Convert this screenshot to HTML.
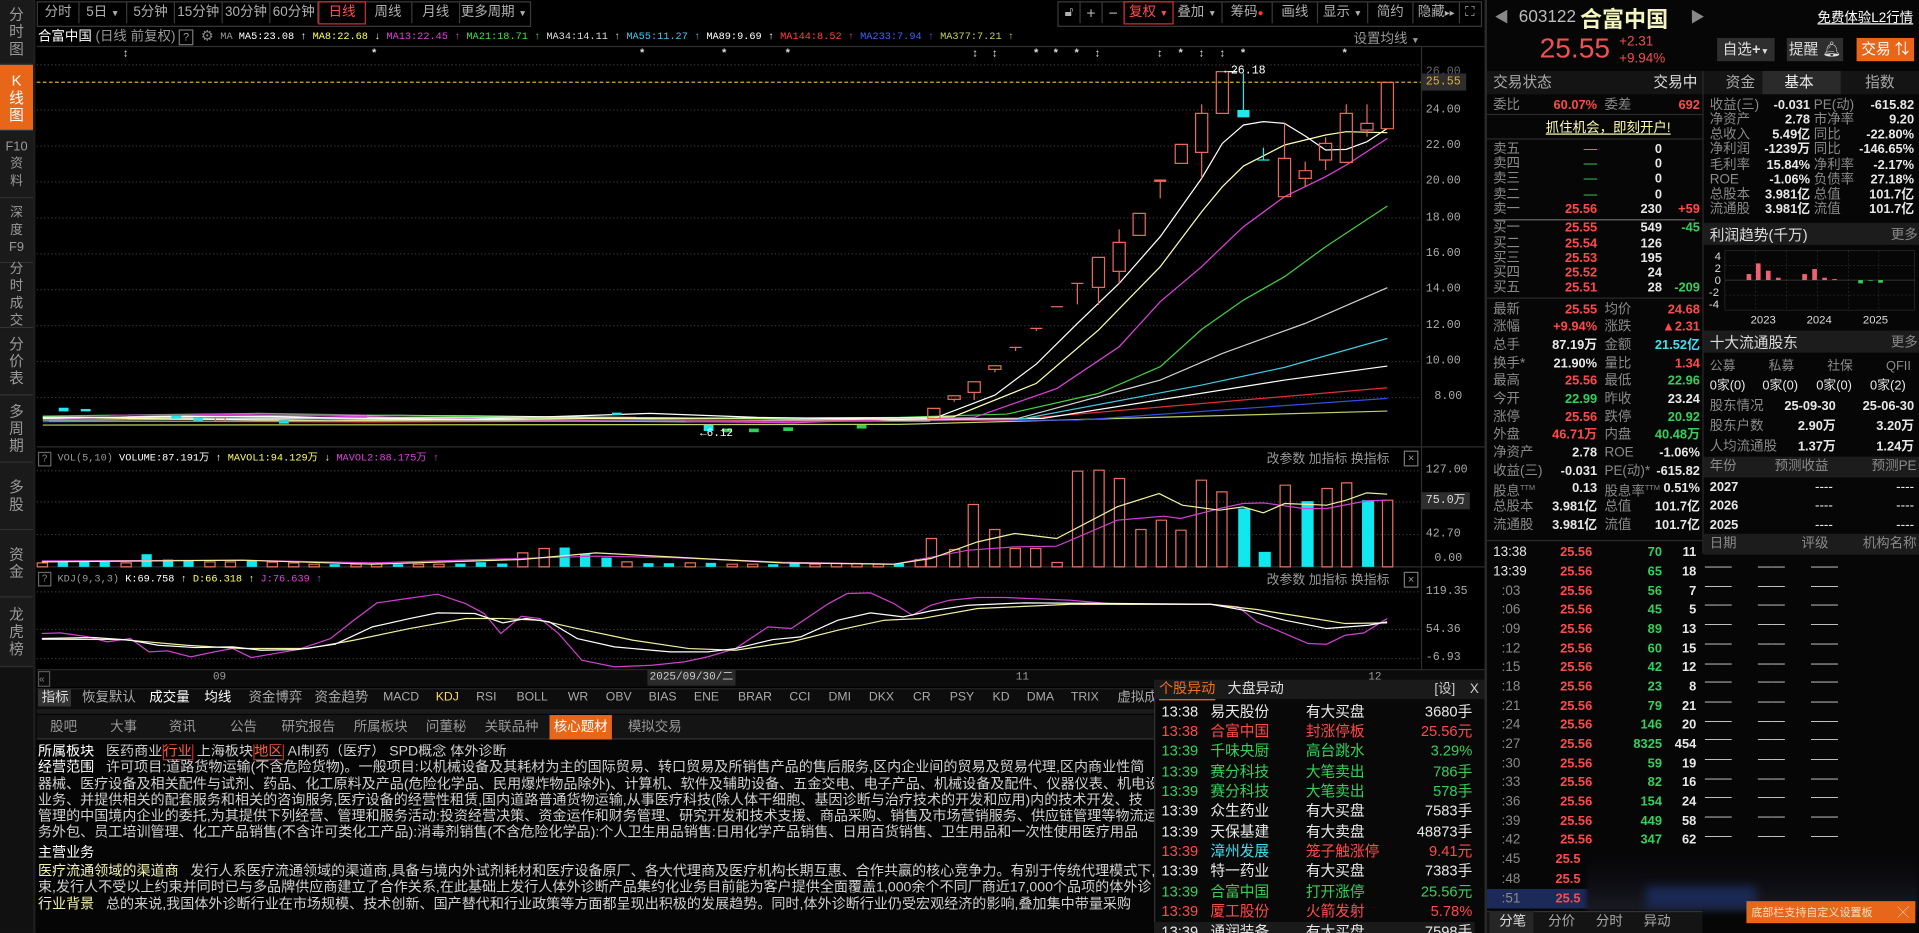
<!DOCTYPE html>
<html><head><meta charset="utf-8">
<style>
html,body{margin:0;padding:0;background:#000;overflow:hidden;width:1919px;height:933px}
#w{position:absolute;left:0;top:0;width:1568px;height:762px;transform:scale(1.22385,1.2244);transform-origin:0 0;background:#050505;font-family:"Liberation Sans","Noto Sans CJK SC",sans-serif;color:#c8c8c8;overflow:hidden}
.a{position:absolute;white-space:nowrap}
.sb{position:absolute;left:0;width:27px;background:#1a1a1a;border-bottom:1px solid #333;color:#9a9a9a;font-size:12px;line-height:14px;text-align:center;display:flex;flex-direction:column;justify-content:center}
.tb{position:absolute;top:2px;height:17px;line-height:17px;font-size:11px;color:#b0b0b0;border-right:1px solid #3a3a3a;text-align:center}
.mono{font-family:"Liberation Mono","Noto Sans CJK SC",monospace}
#R{position:absolute;left:1213px;top:0;width:355px;height:762px;background:#060606;border-left:2px solid #2a2a2a}
.row{position:absolute;left:0;right:0;height:14px;line-height:14px;font-size:11px}
.row span{position:absolute;white-space:nowrap}
.n{font-weight:bold;font-size:10.5px}
.g{color:#8a8a8a}.w{color:#e8e8e8}.r{color:#ff4a4a}.gr{color:#35d05a}.c{color:#40e0f0}.y{color:#e8e070}
.L0{left:5px}.R1{right:265px}.L2{left:96px}.R2{right:181px}.Rv{right:212px}.L3{left:182px}.R3{right:91px}.L4{left:267px}.R4{right:6px}
.hb{position:absolute;background:#1c1c1c}
.ytx{font-size:11.5px;line-height:13.3px;color:#d0d0d0}
.ab{position:absolute;left:0;width:262px;height:16px;font-size:12px;line-height:16px;white-space:nowrap}
</style></head><body><div id="w">

<svg class="a" style="left:0;top:0" width="1213" height="562" viewBox="0 0 1213 562">
<rect width="1213" height="562" fill="#000"/>
<g stroke="#3a3a3a" stroke-dasharray="1 2" stroke-width="1">
<line x1="30" x2="1161" y1="89.9" y2="89.9"/><line x1="30" x2="1161" y1="119.3" y2="119.3"/><line x1="30" x2="1161" y1="148.6" y2="148.6"/><line x1="30" x2="1161" y1="178" y2="178"/><line x1="30" x2="1161" y1="207.3" y2="207.3"/><line x1="30" x2="1161" y1="236.6" y2="236.6"/><line x1="30" x2="1161" y1="266" y2="266"/><line x1="30" x2="1161" y1="295.3" y2="295.3"/><line x1="30" x2="1161" y1="324.7" y2="324.7"/><line x1="30" x2="1161" y1="53" y2="53"/>
<line x1="30" x2="1161" y1="384.5" y2="384.5"/><line x1="30" x2="1161" y1="409.9" y2="409.9"/><line x1="30" x2="1161" y1="436.6" y2="436.6"/>
<line x1="30" x2="1161" y1="483.4" y2="483.4"/><line x1="30" x2="1161" y1="514" y2="514"/><line x1="30" x2="1161" y1="537.9" y2="537.9"/>
</g>
<line x1="30" x2="1161" y1="67.2" y2="67.2" stroke="#d8a840" stroke-dasharray="3 2"/>
<g stroke="#2e2e2e"><line x1="30" x2="1213" y1="38" y2="38"/><line x1="30" x2="1213" y1="365" y2="365"/><line x1="30" x2="1213" y1="463" y2="463"/><line x1="30" x2="1213" y1="547" y2="547"/><line x1="1161.5" x2="1161.5" y1="38" y2="547"/></g>

<g transform="translate(735.3,49) scale(0.2918,0.2723)" fill="none" stroke-width="1">
<polyline vector-effect="non-scaling-stroke" stroke="#c0d060" points="-2400,1095 0,1093 1365,1053"/>
<polyline vector-effect="non-scaling-stroke" stroke="#3050e0" points="-2400,1085 -1200,1080 0,1082 500,1080 1365,1015"/>
<polyline vector-effect="non-scaling-stroke" stroke="#e03030" points="-2400,1082 -1500,1086 0,1080 300,1080 1365,983"/>
<polyline vector-effect="non-scaling-stroke" stroke="#ffffff" points="-2400,1072 -1400,1066 0,1080 400,1075 1077,960 1365,918"/>
<polyline vector-effect="non-scaling-stroke" stroke="#40c8e0" points="-2400,1080 -900,1072 0,1078 350,1075 845,975 1077,922 1365,835"/>
<polyline vector-effect="non-scaling-stroke" stroke="#d0d0d0" points="-2400,1070 -600,1085 0,1076 330,1075 729,960 903,880 1135,790 1365,683"/>
<polyline vector-effect="non-scaling-stroke" stroke="#40d040" points="-2400,1068 -1800,1060 -700,1078 0,1072 300,1062 556,1000 729,920 845,808 962,720 1077,650 1192,560 1365,438"/>
<polyline vector-effect="non-scaling-stroke" stroke="#e040e0" points="-2400,1078 -1900,1062 -1000,1080 -300,1088 0,1077 208,1072 440,985 614,860 729,725 845,620 903,560 962,500 1077,410 1192,350 1250,315 1365,235"/>
<polyline vector-effect="non-scaling-stroke" stroke="#ffffb0" points="-2400,1072 -1600,1082 -800,1075 0,1073 150,1070 382,970 556,810 729,620 845,455 903,380 962,318 1077,255 1192,225 1250,215 1365,218"/>
<polyline vector-effect="non-scaling-stroke" stroke="#ffffff" points="-2400,1075 -2000,1068 -1200,1078 -700,1060 -400,1072 0,1078 95,1075 266,1005 382,912 497,790 614,670 729,530 845,355 903,250 962,195 1018,185 1077,190 1135,228 1192,270 1250,268 1308,245 1365,205"/>
<g stroke="#e8685a">
<rect vector-effect="non-scaling-stroke" x="78" y="1045" width="34" height="30"/>
<rect vector-effect="non-scaling-stroke" x="135" y="1007" width="34" height="11"/><line vector-effect="non-scaling-stroke" x1="152" x2="152" y1="1018" y2="1025"/>
<rect vector-effect="non-scaling-stroke" x="191" y="965" width="34" height="32"/><line vector-effect="non-scaling-stroke" x1="208" x2="208" y1="997" y2="1020"/>
<rect vector-effect="non-scaling-stroke" x="249" y="917" width="34" height="11"/><line vector-effect="non-scaling-stroke" x1="266" x2="266" y1="928" y2="937"/>
<line vector-effect="non-scaling-stroke" x1="307" x2="341" y1="862" y2="862"/><line vector-effect="non-scaling-stroke" x1="324" x2="324" y1="862" y2="873"/>
<line vector-effect="non-scaling-stroke" x1="365" x2="399" y1="805" y2="805"/><line vector-effect="non-scaling-stroke" x1="382" x2="382" y1="805" y2="813"/>
<line vector-effect="non-scaling-stroke" x1="423" x2="457" y1="740" y2="740"/>
<line vector-effect="non-scaling-stroke" x1="480" x2="514" y1="670" y2="670"/><line vector-effect="non-scaling-stroke" x1="497" x2="497" y1="670" y2="733"/>
<rect vector-effect="non-scaling-stroke" x="539" y="592" width="34" height="90"/><line vector-effect="non-scaling-stroke" x1="556" x2="556" y1="682" y2="735"/>
<rect vector-effect="non-scaling-stroke" x="597" y="547" width="34" height="87"/><line vector-effect="non-scaling-stroke" x1="614" x2="614" y1="508" y2="547"/><line vector-effect="non-scaling-stroke" x1="614" x2="614" y1="634" y2="670"/>
<rect vector-effect="non-scaling-stroke" x="653" y="460" width="34" height="66"/>
<line vector-effect="non-scaling-stroke" x1="712" x2="746" y1="362" y2="362" stroke-width="2"/><line vector-effect="non-scaling-stroke" x1="729" x2="729" y1="362" y2="415"/>
<rect vector-effect="non-scaling-stroke" x="771" y="253" width="34" height="57"/>
<rect vector-effect="non-scaling-stroke" x="828" y="160" width="34" height="117"/><line vector-effect="non-scaling-stroke" x1="845" x2="845" y1="133" y2="160"/><line vector-effect="non-scaling-stroke" x1="845" x2="845" y1="277" y2="355"/>
<rect vector-effect="non-scaling-stroke" x="886" y="35" width="34" height="125"/>
<rect vector-effect="non-scaling-stroke" x="1060" y="295" width="34" height="115"/><line vector-effect="non-scaling-stroke" x1="1077" x2="1077" y1="190" y2="295"/>
<rect vector-effect="non-scaling-stroke" x="1118" y="332" width="34" height="23"/><line vector-effect="non-scaling-stroke" x1="1135" x2="1135" y1="305" y2="332"/><line vector-effect="non-scaling-stroke" x1="1135" x2="1135" y1="355" y2="380"/>
<rect vector-effect="non-scaling-stroke" x="1175" y="250" width="34" height="50"/><line vector-effect="non-scaling-stroke" x1="1192" x2="1192" y1="232" y2="250"/><line vector-effect="non-scaling-stroke" x1="1192" x2="1192" y1="300" y2="330"/>
<rect vector-effect="non-scaling-stroke" x="1233" y="160" width="34" height="147"/><line vector-effect="non-scaling-stroke" x1="1250" x2="1250" y1="133" y2="160"/>
<rect vector-effect="non-scaling-stroke" x="1291" y="190" width="34" height="20"/><line vector-effect="non-scaling-stroke" x1="1308" x2="1308" y1="133" y2="190"/><line vector-effect="non-scaling-stroke" x1="1308" x2="1308" y1="210" y2="230"/>
<rect vector-effect="non-scaling-stroke" x="1348" y="67" width="34" height="139"/>
</g>
<rect x="945" y="150" width="34" height="22" fill="#20e8f0"/><line vector-effect="non-scaling-stroke" x1="962" x2="962" y1="40" y2="150" stroke="#20e8f0"/>
<line vector-effect="non-scaling-stroke" x1="1001" x2="1035" y1="300" y2="300" stroke="#20e8f0"/><line vector-effect="non-scaling-stroke" x1="1018" x2="1018" y1="263" y2="300" stroke="#20e8f0"/>
<line vector-effect="non-scaling-stroke" x1="920" x2="945" y1="35" y2="35" stroke="#fff"/>
</g>
<g stroke-width="1">
<rect x="48" y="333" width="8" height="3" fill="#20e8f0"/><rect x="66" y="334" width="8" height="2" fill="#20e8f0"/><rect x="140" y="339" width="8" height="3" fill="#20e8f0"/><rect x="158" y="341" width="8" height="3" fill="#20e8f0"/><rect x="176" y="341" width="8" height="3" fill="none" stroke="#e8685a"/><rect x="228" y="343" width="8" height="3" fill="#20e8f0"/><rect x="500" y="337" width="8" height="2" fill="#20e8f0"/><rect x="575" y="347" width="8" height="5" fill="#20e8f0"/><rect x="590" y="350" width="8" height="3" fill="#30d050"/><rect x="612" y="350" width="8" height="3" fill="#30d050"/><rect x="640" y="349" width="8" height="3" fill="#30d050"/><rect x="700" y="347" width="8" height="3" fill="#30d050"/>
<line x1="40" x2="760" y1="344" y2="344" stroke="#a8a060"/>
<line x1="90" x2="300" y1="339" y2="339" stroke="#c040c0"/><line x1="300" x2="520" y1="341" y2="341" stroke="#e0e080"/><line x1="560" x2="720" y1="344" y2="344" stroke="#e04080"/>
</g>
<text x="572" y="356" fill="#fff" font-size="9" font-family="Liberation Mono">←6.12</text>
<text x="1000" y="60" fill="#fff" font-size="9.5" font-family="Liberation Mono">←26.18</text>

<g transform="translate(0,359.5) scale(0.7607,0.2723)">
<g fill="none" stroke="#e8705a">
<rect vector-effect="non-scaling-stroke" x="40" y="368" width="11" height="12"/><rect vector-effect="non-scaling-stroke" x="130" y="368" width="11" height="12"/><rect vector-effect="non-scaling-stroke" x="220" y="365" width="11" height="15"/><rect vector-effect="non-scaling-stroke" x="242" y="365" width="11" height="15"/><rect vector-effect="non-scaling-stroke" x="287" y="366" width="11" height="14"/><rect vector-effect="non-scaling-stroke" x="310" y="368" width="11" height="12"/><rect vector-effect="non-scaling-stroke" x="332" y="372" width="11" height="8"/><rect vector-effect="non-scaling-stroke" x="377" y="372" width="11" height="8"/><rect vector-effect="non-scaling-stroke" x="399" y="370" width="11" height="10"/><rect vector-effect="non-scaling-stroke" x="444" y="372" width="11" height="8"/><rect vector-effect="non-scaling-stroke" x="466" y="372" width="11" height="8"/><rect vector-effect="non-scaling-stroke" x="556" y="338" width="11" height="42"/><rect vector-effect="non-scaling-stroke" x="579" y="325" width="11" height="55"/><rect vector-effect="non-scaling-stroke" x="668" y="365" width="11" height="15"/><rect vector-effect="non-scaling-stroke" x="736" y="368" width="11" height="12"/><rect vector-effect="non-scaling-stroke" x="781" y="372" width="11" height="8"/><rect vector-effect="non-scaling-stroke" x="803" y="372" width="11" height="8"/><rect vector-effect="non-scaling-stroke" x="870" y="372" width="11" height="8"/><rect vector-effect="non-scaling-stroke" x="893" y="369" width="11" height="11"/><rect vector-effect="non-scaling-stroke" x="915" y="370" width="11" height="10"/><rect vector-effect="non-scaling-stroke" x="938" y="372" width="11" height="8"/><rect vector-effect="non-scaling-stroke" x="983" y="358" width="11" height="22"/>
<rect vector-effect="non-scaling-stroke" x="995" y="295" width="11" height="85"/><rect vector-effect="non-scaling-stroke" x="1020" y="328" width="11" height="52"/><rect vector-effect="non-scaling-stroke" x="1040" y="193" width="11" height="187"/><rect vector-effect="non-scaling-stroke" x="1063" y="268" width="11" height="112"/><rect vector-effect="non-scaling-stroke" x="1085" y="325" width="11" height="55"/><rect vector-effect="non-scaling-stroke" x="1107" y="325" width="11" height="55"/><rect vector-effect="non-scaling-stroke" x="1130" y="367" width="11" height="13"/><rect vector-effect="non-scaling-stroke" x="1152" y="93" width="11" height="287"/><rect vector-effect="non-scaling-stroke" x="1175" y="90" width="11" height="290"/><rect vector-effect="non-scaling-stroke" x="1197" y="115" width="11" height="265"/><rect vector-effect="non-scaling-stroke" x="1220" y="268" width="11" height="112"/><rect vector-effect="non-scaling-stroke" x="1242" y="240" width="11" height="140"/><rect vector-effect="non-scaling-stroke" x="1263" y="270" width="11" height="110"/><rect vector-effect="non-scaling-stroke" x="1285" y="120" width="11" height="260"/><rect vector-effect="non-scaling-stroke" x="1307" y="155" width="11" height="225"/><rect vector-effect="non-scaling-stroke" x="1375" y="135" width="11" height="245"/><rect vector-effect="non-scaling-stroke" x="1420" y="145" width="11" height="235"/><rect vector-effect="non-scaling-stroke" x="1441" y="128" width="11" height="252"/><rect vector-effect="non-scaling-stroke" x="1485" y="180" width="11" height="200"/>
</g>
<g fill="#10e8f0">
<rect x="62" y="365" width="11" height="15"/><rect x="85" y="365" width="11" height="15"/><rect x="107" y="365" width="11" height="15"/><rect x="152" y="342" width="11" height="38"/><rect x="175" y="358" width="11" height="22"/><rect x="197" y="362" width="11" height="18"/><rect x="265" y="362" width="11" height="18"/><rect x="354" y="372" width="11" height="8"/><rect x="422" y="372" width="11" height="8"/><rect x="489" y="370" width="11" height="10"/><rect x="511" y="366" width="11" height="14"/><rect x="534" y="370" width="11" height="10"/><rect x="601" y="322" width="11" height="58"/><rect x="623" y="340" width="11" height="40"/><rect x="646" y="352" width="11" height="28"/><rect x="691" y="369" width="11" height="11"/><rect x="713" y="369" width="11" height="11"/><rect x="758" y="368" width="11" height="12"/><rect x="825" y="372" width="11" height="8"/><rect x="848" y="370" width="11" height="10"/><rect x="960" y="370" width="11" height="10"/>
<rect x="1330" y="205" width="13" height="175"/><rect x="1352" y="335" width="13" height="45"/><rect x="1398" y="183" width="13" height="197"/><rect x="1463" y="180" width="13" height="200"/>
</g>
<polyline vector-effect="non-scaling-stroke" fill="none" stroke="#d040d0" points="45,362 260,360 400,368 640,348 720,352 840,366 960,372 1040,330 1090,320 1135,318 1200,240 1250,228 1268,235 1310,205 1335,190 1357,188 1400,205 1425,205 1468,182 1490,180"/>
<polyline vector-effect="non-scaling-stroke" fill="none" stroke="#f0f0a0" points="45,365 260,360 400,372 560,358 640,338 720,350 840,368 960,372 1000,355 1050,305 1090,280 1135,295 1200,200 1245,160 1270,195 1310,210 1335,200 1357,218 1380,190 1425,195 1446,180 1468,158 1490,162"/>
<polyline vector-effect="non-scaling-stroke" fill="none" stroke="#d040d0" points="45,580 65,578 95,590 115,605 140,595 160,635 180,632 205,650 230,635 250,625 270,652 295,640 320,628 355,595 380,540 405,488 430,478 470,462 500,490 520,520 538,580 560,528 580,535 600,580 625,660 660,680 700,675 735,665 760,650 790,625 825,560 850,565 890,490 910,460 935,458 960,490 980,525 1000,495 1020,480 1050,472 1080,472 1150,480 1200,492 1300,492 1330,500 1350,545 1380,580 1405,610 1425,612 1445,585 1465,578 1490,535"/>
<polyline vector-effect="non-scaling-stroke" fill="none" stroke="#f0f0a0" points="45,597 130,598 200,615 260,625 330,625 380,600 440,565 500,535 540,535 580,540 620,565 680,600 740,625 790,630 850,605 900,570 950,540 990,535 1050,505 1150,492 1300,492 1350,508 1400,530 1445,550 1490,548"/>
<polyline vector-effect="non-scaling-stroke" fill="none" stroke="#ffffff" points="45,595 100,592 140,600 170,615 210,622 250,620 280,630 320,628 360,612 400,560 440,535 470,518 510,520 540,548 565,535 590,545 620,595 660,620 720,635 760,635 790,625 830,598 860,590 900,540 935,518 970,530 1000,512 1040,495 1100,488 1200,490 1300,492 1340,512 1380,540 1425,565 1470,555 1490,545"/>
</g>
</svg>

<div class="sb" style="top:0;height:52px">分<br>时<br>图</div>
<div class="sb" style="top:53px;height:53px;background:#e8661a;color:#fff">K<br>线<br>图</div>
<div class="sb" style="top:107px;height:54px;font-size:10.5px">F10<br>资<br>料</div>
<div class="sb" style="top:162px;height:52px;font-size:10.5px">深<br>度<br>F9</div>
<div class="sb" style="top:215px;height:52px;font-size:11px">分<br>时<br>成<br>交</div>
<div class="sb" style="top:268px;height:54px">分<br>价<br>表</div>
<div class="sb" style="top:323px;height:54px">多<br>周<br>期</div>
<div class="sb" style="top:378px;height:54px">多<br>股</div>
<div class="sb" style="top:433px;height:54px">资<br>金</div>
<div class="sb" style="top:488px;height:56px">龙<br>虎<br>榜</div>
<div class="a" style="left:0;top:545px;width:27px;height:217px;background:#111"></div>
<div class="a" style="left:27px;top:0;width:2px;height:762px;background:#1e1e1e"></div>

<div class="a" style="left:30px;top:1px;width:402px;height:19px;border:1px solid #3a3a3a"></div>
<div class="tb" style="left:31px;width:33px">分时</div>
<div class="tb" style="left:65px;width:38px">5日 <span style="font-size:7px">▼</span></div>
<div class="tb" style="left:104px;width:38px">5分钟</div>
<div class="tb" style="left:143px;width:38px">15分钟</div>
<div class="tb" style="left:182px;width:38px">30分钟</div>
<div class="tb" style="left:221px;width:38px">60分钟</div>
<div class="tb" style="left:260px;width:37px;color:#ff5050;border:1px solid #d03030;top:1px;height:17px">日线</div>
<div class="tb" style="left:298px;width:38px">周线</div>
<div class="tb" style="left:337px;width:38px">月线</div>
<div class="tb" style="left:376px;width:55px;border:none">更多周期 <span style="font-size:7px">▼</span></div>

<div class="a" style="left:864px;top:1px;width:345px;height:19px;border:1px solid #3a3a3a"></div>
<div class="tb" style="left:865px;width:17px">🔓︎</div>
<div class="tb" style="left:883px;width:17px;font-size:13px">+</div>
<div class="tb" style="left:901px;width:17px;font-size:13px">−</div>
<div class="tb" style="left:918px;width:39px;color:#ff5050;border:1px solid #d03030;top:1px;height:17px">复权 <span style="font-size:7px">▼</span></div>
<div class="tb" style="left:958px;width:40px">叠加 <span style="font-size:7px">▼</span></div>
<div class="tb" style="left:999px;width:40px">筹码<span style="color:#f33;font-size:8px">●</span></div>
<div class="tb" style="left:1040px;width:36px">画线</div>
<div class="tb" style="left:1077px;width:40px">显示 <span style="font-size:7px">▼</span></div>
<div class="tb" style="left:1118px;width:36px">简约</div>
<div class="tb" style="left:1155px;width:37px">隐藏<span style="font-size:8px">▸▸</span></div>
<div class="tb" style="left:1193px;width:16px;border:none">⛶</div>

<div class="a" style="left:31px;top:23px;font-size:11px;color:#fff;line-height:14px">合富中国</div>
<div class="a" style="left:78px;top:23px;font-size:11px;color:#999;line-height:14px">(日线 前复权)</div>
<div class="a" style="left:146px;top:24px;width:10px;height:11px;border:1px solid #777;font-size:9px;line-height:11px;text-align:center;color:#999">?</div>
<div class="a" style="left:164px;top:22px;font-size:12px;color:#888">⚙</div>
<div class="a mono" style="left:180px;top:24px;font-size:8.4px;line-height:12px">
<span style="color:#999">MA</span> <span style="color:#fff">MA5:23.08 ↑</span> <span style="color:#ffff60">MA8:22.68 ↓</span> <span style="color:#e040e0">MA13:22.45 ↑</span> <span style="color:#40e040">MA21:18.71 ↑</span> <span style="color:#ddd">MA34:14.11 ↑</span> <span style="color:#40c8f0">MA55:11.27 ↑</span> <span style="color:#fff">MA89:9.69 ↑</span> <span style="color:#ff4040">MA144:8.52 ↑</span> <span style="color:#4060ff">MA233:7.94 ↑</span> <span style="color:#c0d060">MA377:7.21 ↑</span></div>
<div class="a" style="left:1106px;top:23px;font-size:11px;color:#999">设置均线 <span style="font-size:7px">▼</span></div>
<div class="a mono" style="left:0;top:39px;font-size:9px;color:#ddd;font-weight:bold">
<span class="a" style="left:100px">↕</span><span class="a" style="left:303px">*</span><span class="a" style="left:522px">*</span><span class="a" style="left:589px">*</span><span class="a" style="left:641px">*</span><span class="a" style="left:794px">↕</span><span class="a" style="left:810px">↕</span><span class="a" style="left:844px">*</span><span class="a" style="left:860px">*</span><span class="a" style="left:877px">*</span><span class="a" style="left:894px">↕</span><span class="a" style="left:945px">↕</span><span class="a" style="left:962px">*</span><span class="a" style="left:979px">↕</span><span class="a" style="left:996px">↕</span><span class="a" style="left:1013px">*</span><span class="a" style="left:1096px">*</span></div>

<div class="a mono" style="left:1165px;top:0;font-size:9.5px;color:#aaa">
<span class="a" style="top:53px;color:#666">26.00</span>
<span class="a" style="top:60px;left:-4px;background:#2e2e2e;color:#e0b040;padding:0 4px;line-height:14px">25.55</span>
<span class="a" style="top:84px">24.00</span><span class="a" style="top:113px">22.00</span><span class="a" style="top:142px">20.00</span><span class="a" style="top:172px">18.00</span><span class="a" style="top:201px">16.00</span><span class="a" style="top:230px">14.00</span><span class="a" style="top:260px">12.00</span><span class="a" style="top:289px">10.00</span><span class="a" style="top:318px;left:7px">8.00</span>
<span class="a" style="top:378px">127.00</span>
<span class="a" style="top:402px;left:-4px;background:#2e2e2e;color:#ddd;padding:0 4px;line-height:14px">75.0万</span>
<span class="a" style="top:430px">42.70</span><span class="a" style="top:450px;left:7px">0.00</span>
<span class="a" style="top:477px">119.35</span><span class="a" style="top:508px">54.36</span><span class="a" style="top:531px">-6.93</span>
</div>

<div class="a" style="left:31px;top:369px;width:9px;height:10px;border:1px solid #666;font-size:8px;line-height:10px;text-align:center;color:#888">?</div>
<div class="a mono" style="left:47px;top:368px;font-size:8.4px;line-height:12px"><span style="color:#999">VOL(5,10)</span> <span style="color:#fff">VOLUME:87.191万 ↑</span> <span style="color:#ffff60">MAVOL1:94.129万 ↓</span> <span style="color:#e040e0">MAVOL2:88.175万 ↑</span></div>
<div class="a" style="left:1035px;top:367px;font-size:10.5px;color:#999">改参数 加指标 换指标</div>
<div class="a" style="left:1147px;top:368px;width:10px;height:11px;border:1px solid #777;font-size:9px;line-height:11px;text-align:center;color:#999">×</div>
<div class="a" style="left:31px;top:467px;width:9px;height:10px;border:1px solid #666;font-size:8px;line-height:10px;text-align:center;color:#888">?</div>
<div class="a mono" style="left:47px;top:467px;font-size:8.4px;line-height:12px"><span style="color:#999">KDJ(9,3,3)</span> <span style="color:#fff">K:69.758 ↑</span> <span style="color:#ffff60">D:66.318 ↑</span> <span style="color:#e040e0">J:76.639 ↑</span></div>
<div class="a" style="left:1035px;top:466px;font-size:10.5px;color:#999">改参数 加指标 换指标</div>
<div class="a" style="left:1147px;top:467px;width:10px;height:11px;border:1px solid #777;font-size:9px;line-height:11px;text-align:center;color:#999">×</div>

<div class="a" style="left:30px;top:548px;width:1183px;height:13px;background:#0b0b0b"></div>
<div class="a" style="left:31px;top:548px;width:8px;height:11px;border:1px solid #555;font-size:8px;line-height:11px;color:#888">«</div>
<div class="a mono" style="left:174px;top:548px;font-size:9px;color:#999">09</div>
<div class="a mono" style="left:529px;top:547px;width:72px;height:13px;background:#2a2a2a;font-size:9px;line-height:13px;color:#ccc;text-align:center">2025/09/30/二</div>
<div class="a mono" style="left:830px;top:548px;font-size:9px;color:#999">11</div>
<div class="a mono" style="left:1118px;top:548px;font-size:9px;color:#999">12</div>

<div class="a" style="left:30px;top:562px;width:915px;height:16px;background:#0d0d0d;border-top:1px solid #222"></div>
<div class="a" style="left:31px;top:563px;width:27px;height:14px;background:#333"></div>
<div class="a" style="top:563px;left:0;font-size:11px;line-height:14px;color:#aaa">
<span class="a" style="left:34px;color:#ddd">指标</span><span class="a" style="left:67px">恢复默认</span><span class="a" style="left:122px;color:#fff">成交量</span><span class="a" style="left:167px;color:#fff">均线</span><span class="a" style="left:203px">资金博弈</span><span class="a" style="left:257px">资金趋势</span><span class="a" style="left:313px;font-size:10px">MACD</span><span class="a" style="left:356px;font-size:10px;color:#ffd860">KDJ</span><span class="a" style="left:389px;font-size:10px">RSI</span><span class="a" style="left:422px;font-size:10px">BOLL</span><span class="a" style="left:464px;font-size:10px">WR</span><span class="a" style="left:495px;font-size:10px">OBV</span><span class="a" style="left:530px;font-size:10px">BIAS</span><span class="a" style="left:567px;font-size:10px">ENE</span><span class="a" style="left:603px;font-size:10px">BRAR</span><span class="a" style="left:645px;font-size:10px">CCI</span><span class="a" style="left:677px;font-size:10px">DMI</span><span class="a" style="left:710px;font-size:10px">DKX</span><span class="a" style="left:746px;font-size:10px">CR</span><span class="a" style="left:776px;font-size:10px">PSY</span><span class="a" style="left:811px;font-size:10px">KD</span><span class="a" style="left:839px;font-size:10px">DMA</span><span class="a" style="left:875px;font-size:10px">TRIX</span><span class="a" style="left:913px">虚拟成</span></div>
<div class="a" style="left:30px;top:579px;width:915px;height:4px;background:#1a1a1a"></div>

<div class="a" style="left:30px;top:584px;width:915px;height:19px;background:#141414;border-bottom:1px solid #333"></div>
<div class="a" style="top:586px;left:0;font-size:11px;line-height:16px;color:#999">
<span class="a" style="left:41px">股吧</span><span class="a" style="left:90px">大事</span><span class="a" style="left:138px">资讯</span><span class="a" style="left:188px">公告</span><span class="a" style="left:230px">研究报告</span><span class="a" style="left:289px">所属板块</span><span class="a" style="left:348px">问董秘</span><span class="a" style="left:396px">关联品种</span><span class="a" style="left:449px;top:-2px;width:51px;height:20px;line-height:20px;background:#e8661a;color:#fff;text-align:center">核心题材</span><span class="a" style="left:513px">模拟交易</span></div>

<div class="a ytx" style="left:31px;top:608px;width:912px;height:154px;overflow:hidden;white-space:nowrap">
<div><span style="color:#fff">所属板块</span>&nbsp;&nbsp;&nbsp;医药商业<span style="color:#ff6040;border:1px solid #c03020">行业</span> 上海板块<span style="color:#ff6040;border:1px solid #c03020">地区</span> AI制药（医疗） SPD概念 体外诊断</div>
<div><span style="color:#fff">经营范围</span>&nbsp;&nbsp;&nbsp;许可项目:道路货物运输(不含危险货物)。一般项目:以机械设备及其耗材为主的国际贸易、转口贸易及所销售产品的售后服务,区内企业间的贸易及贸易代理,区内商业性简</div>
<div>器械、医疗设备及相关配件与试剂、药品、化工原料及产品(危险化学品、民用爆炸物品除外)、计算机、软件及辅助设备、五金交电、电子产品、机械设备及配件、仪器仪表、机电设</div>
<div>业务、并提供相关的配套服务和相关的咨询服务,医疗设备的经营性租赁,国内道路普通货物运输,从事医疗科技(除人体干细胞、基因诊断与治疗技术的开发和应用)内的技术开发、技</div>
<div>管理的中国境内企业的委托,为其提供下列经营、管理和服务活动:投资经营决策、资金运作和财务管理、研究开发和技术支援、商品采购、销售及市场营销服务、供应链管理等物流运</div>
<div>务外包、员工培训管理、化工产品销售(不含许可类化工产品):消毒剂销售(不含危险化学品):个人卫生用品销售:日用化学产品销售、日用百货销售、卫生用品和一次性使用医疗用品</div>
<div style="color:#fff;margin-top:3px">主营业务</div>
<div style="margin-top:2px"><span style="color:#f0f0b0">医疗流通领域的渠道商</span>&nbsp;&nbsp;&nbsp;发行人系医疗流通领域的渠道商,具备与境内外试剂耗材和医疗设备原厂、各大代理商及医疗机构长期互惠、合作共赢的核心竞争力。有别于传统代理模式下,</div>
<div>束,发行人不受以上约束并同时已与多品牌供应商建立了合作关系,在此基础上发行人体外诊断产品集约化业务目前能为客户提供全面覆盖1,000余个不同厂商近17,000个品项的体外诊</div>
<div><span style="color:#f0f0b0">行业背景</span>&nbsp;&nbsp;&nbsp;总的来说,我国体外诊断行业在市场规模、技术创新、国产替代和行业政策等方面都呈现出积极的发展趋势。同时,体外诊断行业仍受宏观经济的影响,叠加集中带量采购</div>
</div>

<div class="a" style="left:943px;top:555px;width:270px;height:207px;background:#080808;border-left:1px solid #333"></div>
<div class="a" style="left:943px;top:555px;width:270px;height:16px;background:#1a1a1a"></div>
<div class="a" style="left:947px;top:555px;font-size:11.5px;line-height:16px;color:#f07020;border-bottom:1px solid #f07020">个股异动</div>
<div class="a" style="left:1003px;top:555px;font-size:11.5px;line-height:16px;color:#ddd">大盘异动</div>
<div class="a" style="left:1172px;top:555px;font-size:11px;line-height:16px;color:#ccc">[设]</div>
<div class="a" style="left:1201px;top:555px;font-size:11px;line-height:16px;color:#ccc">X</div>
<div class="a" style="left:943px;top:573px;width:270px;height:189px;font-size:12px;overflow:hidden">
<div class="ab w" style="top:0"><span class="a" style="left:6px">13:38</span><span class="a" style="left:46px">易天股份</span><span class="a" style="left:124px">有大买盘</span><span class="a" style="right:2px">3680手</span></div>
<div class="ab r" style="top:16px"><span class="a" style="left:6px">13:38</span><span class="a" style="left:46px">合富中国</span><span class="a" style="left:124px">封涨停板</span><span class="a" style="right:2px">25.56元</span></div>
<div class="ab gr" style="top:32px"><span class="a" style="left:6px">13:39</span><span class="a" style="left:46px">千味央厨</span><span class="a" style="left:124px">高台跳水</span><span class="a" style="right:2px">3.29%</span></div>
<div class="ab gr" style="top:49px"><span class="a" style="left:6px">13:39</span><span class="a" style="left:46px">赛分科技</span><span class="a" style="left:124px">大笔卖出</span><span class="a" style="right:2px">786手</span></div>
<div class="ab gr" style="top:65px"><span class="a" style="left:6px">13:39</span><span class="a" style="left:46px">赛分科技</span><span class="a" style="left:124px">大笔卖出</span><span class="a" style="right:2px">578手</span></div>
<div class="ab w" style="top:81px"><span class="a" style="left:6px">13:39</span><span class="a" style="left:46px">众生药业</span><span class="a" style="left:124px">有大买盘</span><span class="a" style="right:2px">7583手</span></div>
<div class="ab w" style="top:98px"><span class="a" style="left:6px">13:39</span><span class="a" style="left:46px">天保基建</span><span class="a" style="left:124px">有大卖盘</span><span class="a" style="right:2px">48873手</span></div>
<div class="ab r" style="top:114px"><span class="a" style="left:6px">13:39</span><span class="a c" style="left:46px">漳州发展</span><span class="a" style="left:124px">笼子触涨停</span><span class="a" style="right:2px">9.41元</span></div>
<div class="ab w" style="top:130px"><span class="a" style="left:6px">13:39</span><span class="a" style="left:46px">特一药业</span><span class="a" style="left:124px">有大买盘</span><span class="a" style="right:2px">7383手</span></div>
<div class="ab gr" style="top:147px"><span class="a" style="left:6px">13:39</span><span class="a" style="left:46px">合富中国</span><span class="a" style="left:124px">打开涨停</span><span class="a" style="right:2px">25.56元</span></div>
<div class="ab r" style="top:163px"><span class="a" style="left:6px">13:39</span><span class="a" style="left:46px">厦工股份</span><span class="a" style="left:124px">火箭发射</span><span class="a" style="right:2px">5.78%</span></div>
<div class="ab w" style="top:180px;background:#1a1a1a"><span class="a" style="left:6px">13:39</span><span class="a" style="left:46px">通润装备</span><span class="a" style="left:124px">有大买盘</span><span class="a" style="right:2px">7598手</span></div>
</div>

<div id="R">
<div class="a" style="left:6px;top:5px;font-size:12px;color:#888">◀</div>
<div class="a" style="left:26px;top:5px;font-size:14px;color:#bbb">603122</div>
<div class="a" style="left:76px;top:2px;font-size:18px;color:#f4f4c0;font-weight:bold">合富中国</div>
<div class="a" style="left:166px;top:5px;font-size:12px;color:#888">▶</div>
<div class="a" style="left:270px;top:6px;font-size:11px;color:#fff;text-decoration:underline">免费体验L2行情</div>
<div class="a" style="left:43px;top:26px;font-size:23px;color:#f05050">25.55</div>
<div class="a" style="left:108px;top:27px;font-size:11px;color:#f05050;line-height:14px">+2.31<br>+9.94%</div>
<div class="a" style="left:188px;top:31px;width:47px;height:19px;background:#2e2e2e;font-size:12px;line-height:19px;color:#ddd;text-align:center">自选<b>+</b><span style="font-size:7px">▼</span></div>
<div class="a" style="left:245px;top:31px;width:46px;height:19px;background:#2e2e2e;font-size:12px;line-height:19px;color:#ddd;text-align:center">提醒 🔔︎</div>
<div class="a" style="left:302px;top:31px;width:47px;height:19px;background:#e8661a;font-size:12px;line-height:19px;color:#fff;text-align:center">交易 ⇅</div>
<div class="hb" style="left:0;top:58px;width:355px;height:19px;background:#141414"></div>
<div class="hb" style="left:225px;top:58px;width:64px;height:19px;background:#2a2a2a"></div>
<div class="a" style="left:0;top:58px;width:355px;font-size:12px;line-height:19px;color:#aaa">
<span class="a" style="left:5px">交易状态</span><span class="a" style="left:136px;color:#ddd">交易中</span><span class="a" style="left:195px">资金</span><span class="a" style="left:243px;color:#eee">基本</span><span class="a" style="left:309px">指数</span></div>
<div class="a" style="left:176px;top:58px;width:1px;height:394px;background:#2a2a2a"></div>
<div class="row" style="top:79px"><span class="L0 g">委比</span><span class="R1 r n">60.07%</span><span class="L2 g">委差</span><span class="R2 r n">692</span></div>
<div class="a" style="left:0;top:93px;width:176px;height:1px;background:#2a2a2a"></div>
<div class="a" style="left:48px;top:96px;font-size:11px;color:#ffffb0;text-decoration:underline">抓住机会，即刻开户!</div>
<div class="a" style="left:0;top:113px;width:176px;height:1px;background:#2a2a2a"></div>
<div class="row" style="top:115px"><span class="L0 g">卖五</span><span class="R1 gr">—</span><span class="Rv w n">0</span></div>
<div class="row" style="top:127px"><span class="L0 g">卖四</span><span class="R1 gr">—</span><span class="Rv w n">0</span></div>
<div class="row" style="top:139px"><span class="L0 g">卖三</span><span class="R1 gr">—</span><span class="Rv w n">0</span></div>
<div class="row" style="top:152px"><span class="L0 g">卖二</span><span class="R1 gr">—</span><span class="Rv w n">0</span></div>
<div class="row" style="top:164px"><span class="L0 g">卖一</span><span class="R1 r n">25.56</span><span class="Rv w n">230</span><span class="R2 r n">+59</span></div>
<div class="a" style="left:5px;top:179px;width:165px;height:1px;background:#666"></div>
<div class="row" style="top:179px"><span class="L0 g">买一</span><span class="R1 r n">25.55</span><span class="Rv w n">549</span><span class="R2 gr n">-45</span></div>
<div class="row" style="top:192px"><span class="L0 g">买二</span><span class="R1 r n">25.54</span><span class="Rv w n">126</span></div>
<div class="row" style="top:204px"><span class="L0 g">买三</span><span class="R1 r n">25.53</span><span class="Rv w n">195</span></div>
<div class="row" style="top:216px"><span class="L0 g">买四</span><span class="R1 r n">25.52</span><span class="Rv w n">24</span></div>
<div class="row" style="top:228px"><span class="L0 g">买五</span><span class="R1 r n">25.51</span><span class="Rv w n">28</span><span class="R2 gr n">-209</span></div>
<div class="a" style="left:0;top:243px;width:176px;height:1px;background:#2a2a2a"></div>
<div class="row" style="top:246px"><span class="L0 g">最新</span><span class="R1 r n">25.55</span><span class="L2 g">均价</span><span class="R2 r n">24.68</span></div>
<div class="row" style="top:260px"><span class="L0 g">涨幅</span><span class="R1 r n">+9.94%</span><span class="L2 g">涨跌</span><span class="R2 r n">▲2.31</span></div>
<div class="row" style="top:275px"><span class="L0 g">总手</span><span class="R1 w n">87.19万</span><span class="L2 g">金额</span><span class="R2 c n">21.52亿</span></div>
<div class="row" style="top:290px"><span class="L0 g">换手*</span><span class="R1 w n">21.90%</span><span class="L2 g">量比</span><span class="R2 r n">1.34</span></div>
<div class="row" style="top:304px"><span class="L0 g">最高</span><span class="R1 r n">25.56</span><span class="L2 g">最低</span><span class="R2 gr n">22.96</span></div>
<div class="row" style="top:319px"><span class="L0 g">今开</span><span class="R1 gr n">22.99</span><span class="L2 g">昨收</span><span class="R2 w n">23.24</span></div>
<div class="row" style="top:334px"><span class="L0 g">涨停</span><span class="R1 r n">25.56</span><span class="L2 g">跌停</span><span class="R2 gr n">20.92</span></div>
<div class="row" style="top:348px"><span class="L0 g">外盘</span><span class="R1 r n">46.71万</span><span class="L2 g">内盘</span><span class="R2 gr n">40.48万</span></div>
<div class="row" style="top:363px"><span class="L0 g">净资产</span><span class="R1 w n">2.78</span><span class="L2 g">ROE</span><span class="R2 w n">-1.06%</span></div>
<div class="row" style="top:378px"><span class="L0 g">收益(三)</span><span class="R1 w n">-0.031</span><span class="L2 g">PE(动)*</span><span class="R2 w n">-615.82</span></div>
<div class="row" style="top:392px"><span class="L0 g">股息<sup style="font-size:6px">TTM</sup></span><span class="R1 w n">0.13</span><span class="L2 g">股息率<sup style="font-size:6px">TTM</sup></span><span class="R2 w n">0.51%</span></div>
<div class="row" style="top:407px"><span class="L0 g">总股本</span><span class="R1 w n">3.981亿</span><span class="L2 g">总值</span><span class="R2 w n">101.7亿</span></div>
<div class="row" style="top:422px"><span class="L0 g">流通股</span><span class="R1 w n">3.981亿</span><span class="L2 g">流值</span><span class="R2 w n">101.7亿</span></div>
<div class="a" style="left:0;top:441px;width:176px;height:1px;background:#2a2a2a"></div>

<div class="row" style="top:79px"><span class="L3 g">收益(三)</span><span class="R3 w n">-0.031</span><span class="L4 g">PE(动)</span><span class="R4 w n">-615.82</span></div>
<div class="row" style="top:91px"><span class="L3 g">净资产</span><span class="R3 w n">2.78</span><span class="L4 g">市净率</span><span class="R4 w n">9.20</span></div>
<div class="row" style="top:103px"><span class="L3 g">总收入</span><span class="R3 w n">5.49亿</span><span class="L4 g">同比</span><span class="R4 w n">-22.80%</span></div>
<div class="row" style="top:115px"><span class="L3 g">净利润</span><span class="R3 w n">-1239万</span><span class="L4 g">同比</span><span class="R4 w n">-146.65%</span></div>
<div class="row" style="top:128px"><span class="L3 g">毛利率</span><span class="R3 w n">15.84%</span><span class="L4 g">净利率</span><span class="R4 w n">-2.17%</span></div>
<div class="row" style="top:140px"><span class="L3 g">ROE</span><span class="R3 w n">-1.06%</span><span class="L4 g">负债率</span><span class="R4 w n">27.18%</span></div>
<div class="row" style="top:152px"><span class="L3 g">总股本</span><span class="R3 w n">3.981亿</span><span class="L4 g">总值</span><span class="R4 w n">101.7亿</span></div>
<div class="row" style="top:164px"><span class="L3 g">流通股</span><span class="R3 w n">3.981亿</span><span class="L4 g">流值</span><span class="R4 w n">101.7亿</span></div>
<div class="hb" style="left:177px;top:182px;width:178px;height:18px"></div>
<div class="a" style="left:182px;top:183px;font-size:12px;color:#ddd">利润趋势(千万)</div>
<div class="a" style="left:330px;top:183px;font-size:11px;color:#888">更多</div>
<svg class="a" style="left:0;top:0" width="355" height="280" viewBox="1213 0 355 280">
<g transform="translate(1209.2,81.7) scale(0.2723)">
<rect x="728" y="452" width="569" height="178" fill="none" stroke="#555"/>
<g stroke="#555" stroke-dasharray="6 6"><line x1="728" x2="1297" y1="497" y2="497"/><line x1="728" x2="1297" y1="585" y2="585"/><line x1="820" x2="820" y1="452" y2="630"/><line x1="913" x2="913" y1="452" y2="630"/><line x1="1005" x2="1005" y1="452" y2="630"/><line x1="1098" x2="1098" y1="452" y2="630"/><line x1="1190" x2="1190" y1="452" y2="630"/></g>
<line x1="728" x2="1297" y1="540" y2="540" stroke="#888"/>
<g fill="#f06070"><rect x="793" y="522" width="14" height="18"/><rect x="821" y="490" width="14" height="50"/><rect x="851" y="512" width="14" height="28"/><rect x="881" y="533" width="14" height="7"/><rect x="960" y="522" width="14" height="18"/><rect x="990" y="507" width="14" height="33"/><rect x="1020" y="533" width="14" height="7"/><rect x="1050" y="537" width="14" height="3"/></g>
<g fill="#30d050"><rect x="1128" y="540" width="14" height="10"/><rect x="1158" y="540" width="14" height="2"/><rect x="1188" y="540" width="14" height="8"/></g>
<g fill="#ddd" font-size="34" font-family="Liberation Sans"><text x="697" y="480">4</text><text x="697" y="516">2</text><text x="697" y="552">0</text><text x="680" y="588">-2</text><text x="680" y="624">-4</text><text x="805" y="670">2023</text><text x="973" y="670">2024</text><text x="1142" y="670">2025</text></g>
</g></svg>
<div class="hb" style="left:177px;top:270px;width:178px;height:18px"></div>
<div class="a" style="left:182px;top:271px;font-size:12px;color:#ddd">十大流通股东</div>
<div class="a" style="left:330px;top:271px;font-size:11px;color:#888">更多</div>
<div class="row" style="top:292px;font-size:10.5px"><span class="g" style="left:182px">公募</span><span class="g" style="left:230px">私募</span><span class="g" style="left:278px">社保</span><span class="g" style="left:326px">QFII</span></div>
<div class="row" style="top:308px;font-size:10.5px"><span class="w" style="left:182px">0家(0)</span><span class="w" style="left:225px">0家(0)</span><span class="w" style="left:269px">0家(0)</span><span class="w" style="left:313px">0家(2)</span></div>
<div class="row" style="top:325px"><span class="L3 g">股东情况</span><span class="R3 w n" style="right:70px">25-09-30</span><span class="R4 w n">25-06-30</span></div>
<div class="row" style="top:341px"><span class="L3 g">股东户数</span><span class="R3 w n" style="right:70px">2.90万</span><span class="R4 w n">3.20万</span></div>
<div class="row" style="top:358px"><span class="L3 g">人均流通股</span><span class="R3 w n" style="right:70px">1.37万</span><span class="R4 w n">1.24万</span></div>
<div class="hb" style="left:177px;top:373px;width:178px;height:17px"></div>
<div class="row" style="top:374px;font-size:11px"><span class="L3 g">年份</span><span class="g" style="left:235px">预测收益</span><span class="g" style="right:4px">预测PE</span></div>
<div class="row" style="top:391px"><span class="L3 w n">2027</span><span class="w" style="left:268px">----</span><span class="w" style="right:6px">----</span></div>
<div class="row" style="top:406px"><span class="L3 w n">2026</span><span class="w" style="left:268px">----</span><span class="w" style="right:6px">----</span></div>
<div class="row" style="top:422px"><span class="L3 w n">2025</span><span class="w" style="left:268px">----</span><span class="w" style="right:6px">----</span></div>
<div class="hb" style="left:177px;top:436px;width:178px;height:17px"></div>
<div class="row" style="top:437px;font-size:11px"><span class="L3 g">日期</span><span class="g" style="left:257px">评级</span><span class="g" style="right:4px">机构名称</span></div>

<div class="a" style="left:0;top:444px;width:176px;height:300px;font-size:11px">
<div class="row" style="top:0"><span class="L0 w">13:38</span><span class="r n" style="right:90px">25.56</span><span class="gr n" style="right:33px">70</span><span class="w n" style="right:5px">11</span></div>
<div class="row" style="top:16px"><span class="L0 w">13:39</span><span class="r n" style="right:90px">25.56</span><span class="gr n" style="right:33px">65</span><span class="w n" style="right:5px">18</span></div>
<div class="row" style="top:32px"><span class="L0 g" style="left:12px">:03</span><span class="r n" style="right:90px">25.56</span><span class="gr n" style="right:33px">56</span><span class="w n" style="right:5px">7</span></div>
<div class="row" style="top:47px"><span class="L0 g" style="left:12px">:06</span><span class="r n" style="right:90px">25.56</span><span class="gr n" style="right:33px">45</span><span class="w n" style="right:5px">5</span></div>
<div class="row" style="top:63px"><span class="L0 g" style="left:12px">:09</span><span class="r n" style="right:90px">25.56</span><span class="gr n" style="right:33px">89</span><span class="w n" style="right:5px">13</span></div>
<div class="row" style="top:79px"><span class="L0 g" style="left:12px">:12</span><span class="r n" style="right:90px">25.56</span><span class="gr n" style="right:33px">60</span><span class="w n" style="right:5px">15</span></div>
<div class="row" style="top:94px"><span class="L0 g" style="left:12px">:15</span><span class="r n" style="right:90px">25.56</span><span class="gr n" style="right:33px">42</span><span class="w n" style="right:5px">12</span></div>
<div class="row" style="top:110px"><span class="L0 g" style="left:12px">:18</span><span class="r n" style="right:90px">25.56</span><span class="gr n" style="right:33px">23</span><span class="w n" style="right:5px">8</span></div>
<div class="row" style="top:126px"><span class="L0 g" style="left:12px">:21</span><span class="r n" style="right:90px">25.56</span><span class="gr n" style="right:33px">79</span><span class="w n" style="right:5px">21</span></div>
<div class="row" style="top:141px"><span class="L0 g" style="left:12px">:24</span><span class="r n" style="right:90px">25.56</span><span class="gr n" style="right:33px">146</span><span class="w n" style="right:5px">20</span></div>
<div class="row" style="top:157px"><span class="L0 g" style="left:12px">:27</span><span class="r n" style="right:90px">25.56</span><span class="gr n" style="right:33px">8325</span><span class="w n" style="right:5px">454</span></div>
<div class="row" style="top:173px"><span class="L0 g" style="left:12px">:30</span><span class="r n" style="right:90px">25.56</span><span class="gr n" style="right:33px">59</span><span class="w n" style="right:5px">19</span></div>
<div class="row" style="top:188px"><span class="L0 g" style="left:12px">:33</span><span class="r n" style="right:90px">25.56</span><span class="gr n" style="right:33px">82</span><span class="w n" style="right:5px">16</span></div>
<div class="row" style="top:204px"><span class="L0 g" style="left:12px">:36</span><span class="r n" style="right:90px">25.56</span><span class="gr n" style="right:33px">154</span><span class="w n" style="right:5px">24</span></div>
<div class="row" style="top:220px"><span class="L0 g" style="left:12px">:39</span><span class="r n" style="right:90px">25.56</span><span class="gr n" style="right:33px">449</span><span class="w n" style="right:5px">58</span></div>
<div class="row" style="top:235px"><span class="L0 g" style="left:12px">:42</span><span class="r n" style="right:90px">25.56</span><span class="gr n" style="right:33px">347</span><span class="w n" style="right:5px">62</span></div>
<div class="row" style="top:251px"><span class="L0 g" style="left:12px">:45</span><span class="r n" style="left:56px">25.5</span></div>
<div class="row" style="top:267px"><span class="L0 g" style="left:12px">:48</span><span class="r n" style="left:56px">25.5</span></div>
<div class="a" style="left:0;top:282px;width:176px;height:16px;background:#1c2a5a"></div>
<div class="row" style="top:283px"><span class="L0 g" style="left:12px">:51</span><span class="r n" style="left:56px">25.5</span></div>
</div>
<div class="a" style="left:178px;top:456px;width:177px;height:240px;font-size:11px;color:#ccc;line-height:15.7px;white-space:pre">——       ——       ——
——       ——       ——
——       ——       ——
——       ——       ——
——       ——       ——
——       ——       ——
——       ——       ——
——       ——       ——
——       ——       ——
——       ——       ——
——       ——       ——
——       ——       ——
——       ——       ——
——       ——       ——
——       ——       ——</div>
<div class="a" style="left:81px;top:696px;width:272px;height:48px;background:linear-gradient(180deg,#050505,#0c0c12 50%,#1a1a22);filter:blur(2px)"></div>
<div class="a" style="left:130px;top:724px;width:90px;height:18px;background:#1a2a55;filter:blur(4px)"></div>
<div class="a" style="left:212px;top:736px;width:138px;height:18px;background:#e8661a;font-size:9px;line-height:18px;color:#ffe0c0;padding-left:4px;box-sizing:border-box">底部栏支持自定义设置板　　 ╳</div>
<div class="a" style="left:0;top:744px;width:176px;height:18px;background:#141414;border-top:1px solid #333"></div>
<div class="a" style="left:2px;top:744px;width:36px;height:18px;background:#262626"></div>
<div class="a" style="left:0;top:745px;font-size:11px;line-height:17px;color:#aaa"><span class="a" style="left:10px;color:#ddd">分笔</span><span class="a" style="left:50px">分价</span><span class="a" style="left:89px">分时</span><span class="a" style="left:128px">异动</span></div>
</div>
</div></body></html>
